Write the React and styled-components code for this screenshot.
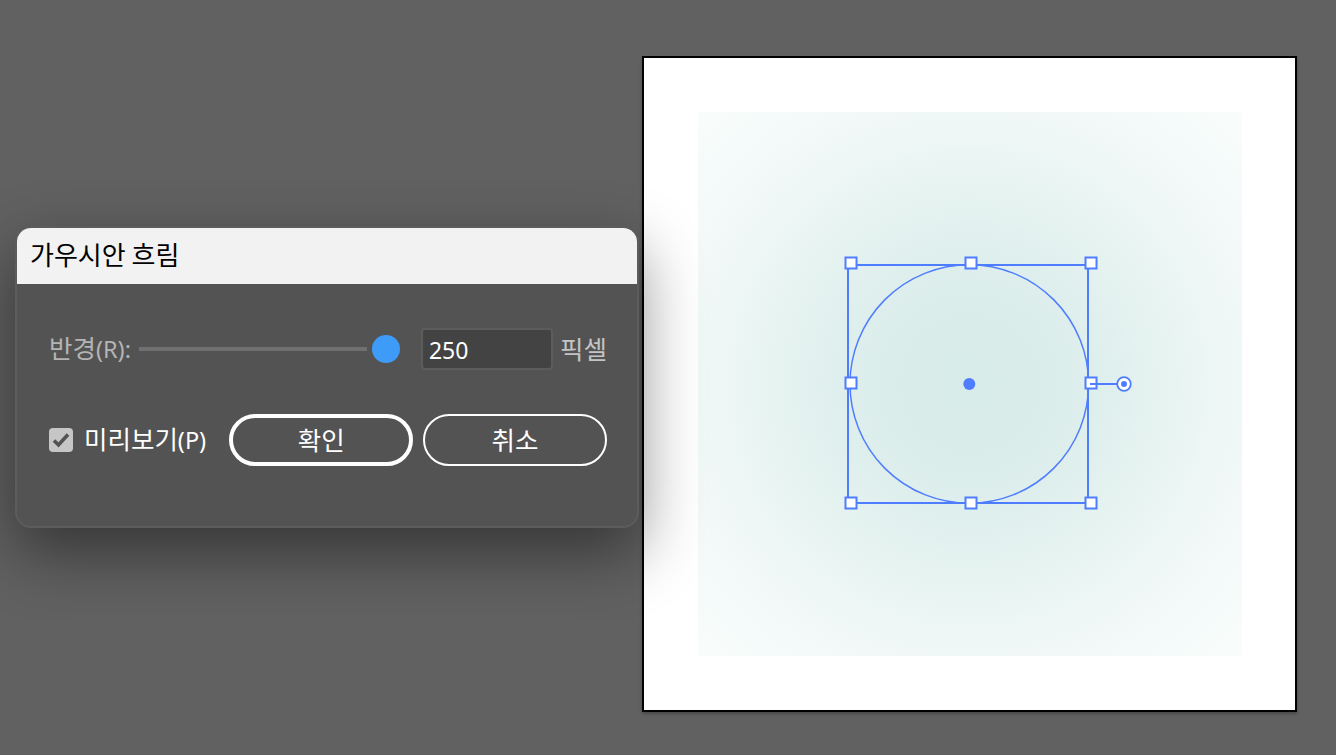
import styled, { createGlobalStyle } from "styled-components";

const GlobalStyle = createGlobalStyle`
  html, body {
    margin: 0;
    padding: 0;
    height: 100%;
    overflow: hidden;
    background: #616161;
  }
`;

const Stage = styled.div`
  display: flex;
  align-items: flex-start;
  gap: 3px;
  width: 1336px;
  height: 755px;
  padding-left: 15px;
  box-sizing: border-box;
  background: #616161;
  font-family: "Noto Sans CJK KR", "Noto Sans", sans-serif;
`;

const Dialog = styled.div`
  position: relative;
  z-index: 2;
  width: 624px;
  height: 302px;
  margin-top: 226px;
  box-sizing: border-box;
  border: 2px solid #5c5c5c;
  border-radius: 16px;
  background: #535353;
  box-shadow: 0 24px 64px rgba(0, 0, 0, 0.45);
  overflow: hidden;
`;

const TitleBar = styled.div`
  height: 56px;
  padding: 0 0 4px 13px;
  box-sizing: border-box;
  display: flex;
  align-items: center;
  background: #f2f2f2;
  color: #000;
  font-size: 26px;
  line-height: 1;
`;

const Body = styled.div`
  display: flex;
  flex-direction: column;
  gap: 44px;
  padding: 44px 30px 0 32px;
`;

const Row = styled.div`
  display: flex;
  align-items: center;
`;

const RadiusRow = styled(Row)`
  height: 42px;
`;

const FieldLabel = styled.span`
  color: ${(p) => p.$color};
  font-size: 25.5px;
  line-height: 1;
  white-space: nowrap;
  padding-bottom: 3px;
`;

const Hint = styled.span`
  font-family: "Noto Sans", sans-serif;
  font-size: 23.5px;
`;

const Slider = styled.div`
  display: flex;
  align-items: center;
  margin-left: 8px;
  gap: 5px;
`;

const Track = styled.div`
  width: 228px;
  height: 4px;
  background: #707070;
`;

const Knob = styled.div`
  width: 28px;
  height: 28px;
  border-radius: 50%;
  background: #3f9bf8;
`;

const NumberBox = styled.div`
  width: 132px;
  height: 42px;
  margin: 0 7px 0 21px;
  padding: 2px 0 0 6px;
  box-sizing: border-box;
  display: flex;
  align-items: center;
  border: 2px solid #5c5c5c;
  border-radius: 4px;
  background: #434343;
  color: #fff;
  font-family: "Noto Sans", sans-serif;
  font-size: 23px;
`;

const PreviewRow = styled(Row)`
  height: 52px;
`;

const CheckBox = styled.div`
  width: 24px;
  height: 24px;
  margin-right: 11px;
  border-radius: 4px;
  background: #c6c6c6;
  display: flex;
`;

const PillButton = styled.button`
  width: 184px;
  height: 52px;
  padding: 0 0 3px;
  box-sizing: border-box;
  border: ${(p) => (p.$primary ? "4px" : "2px")} solid #fff;
  border-radius: 26px;
  background: transparent;
  color: #fff;
  font-family: inherit;
  font-size: 25.5px;
  margin-left: ${(p) => (p.$primary ? "23px" : "10px")};
`;

const Artboard = styled.div`
  width: 655px;
  height: 656px;
  margin-top: 56px;
  box-sizing: border-box;
  border: 2px solid #000;
  background: #fff;
  box-shadow: 0 2px 3px rgba(0, 0, 0, 0.25);
  display: flex;
  align-items: center;
  justify-content: center;
`;

const BlurSquare = styled.div`
  position: relative;
  width: 544px;
  height: 544px;
  margin-left: 1px;
  background: radial-gradient(
    circle 385px at 271px 272px,
    #d7ebe9 0,
    #ddeeec 30%,
    #e6f3f1 50%,
    #f0f8f7 70%,
    #f9fdfc 100%
  );
`;

const Selection = styled.svg`
  position: absolute;
  left: 138px;
  top: 138px;
`;

const handles = [
  [15, 13],
  [135, 13],
  [255, 13],
  [15, 133],
  [255, 133],
  [15, 253],
  [135, 253],
  [255, 253],
];

const blue = "#4f7dff";

const App = () => {
  return (
    <>
      <GlobalStyle />
      <Stage>
        <Dialog>
          <TitleBar>가우시안 흐림</TitleBar>
          <Body>
            <RadiusRow>
              <FieldLabel $color="#b4b4b4">
                반경<Hint>(R):</Hint>
              </FieldLabel>
              <Slider>
                <Track />
                <Knob />
              </Slider>
              <NumberBox>250</NumberBox>
              <FieldLabel $color="#c4c4c4">픽셀</FieldLabel>
            </RadiusRow>
            <PreviewRow>
              <CheckBox>
                <svg width="24" height="24" viewBox="0 0 24 24">
                  <path d="M5 12.5l4.5 4.5 9.5-10.5" fill="none" stroke="#535353" strokeWidth="3.6" />
                </svg>
              </CheckBox>
              <FieldLabel $color="#fff">
                미리보기<Hint>(P)</Hint>
              </FieldLabel>
              <PillButton $primary>확인</PillButton>
              <PillButton>취소</PillButton>
            </PreviewRow>
          </Body>
        </Dialog>
        <Artboard>
          <BlurSquare>
            <Selection width="300" height="270" viewBox="0 0 300 270">
              <rect x="12" y="15" width="240" height="238" fill="none" stroke={blue} strokeWidth="2" />
              <circle cx="133.3" cy="134" r="119.3" fill="none" stroke={blue} strokeWidth="1.5" />
              <circle cx="133.3" cy="134" r="6" fill={blue} />
              {handles.map(([x, y]) => (
                <rect
                  key={`${x}-${y}`}
                  x={x - 5.5}
                  y={y - 5.5}
                  width="11"
                  height="11"
                  fill="#fff"
                  stroke={blue}
                  strokeWidth="2"
                />
              ))}
              <path d="M254 134h27" stroke={blue} strokeWidth="2" />
              <circle cx="288" cy="134" r="6.8" fill="#fff" stroke={blue} strokeWidth="1.8" />
              <circle cx="288" cy="134" r="3" fill={blue} />
            </Selection>
          </BlurSquare>
        </Artboard>
      </Stage>
    </>
  );
};

export default App;
